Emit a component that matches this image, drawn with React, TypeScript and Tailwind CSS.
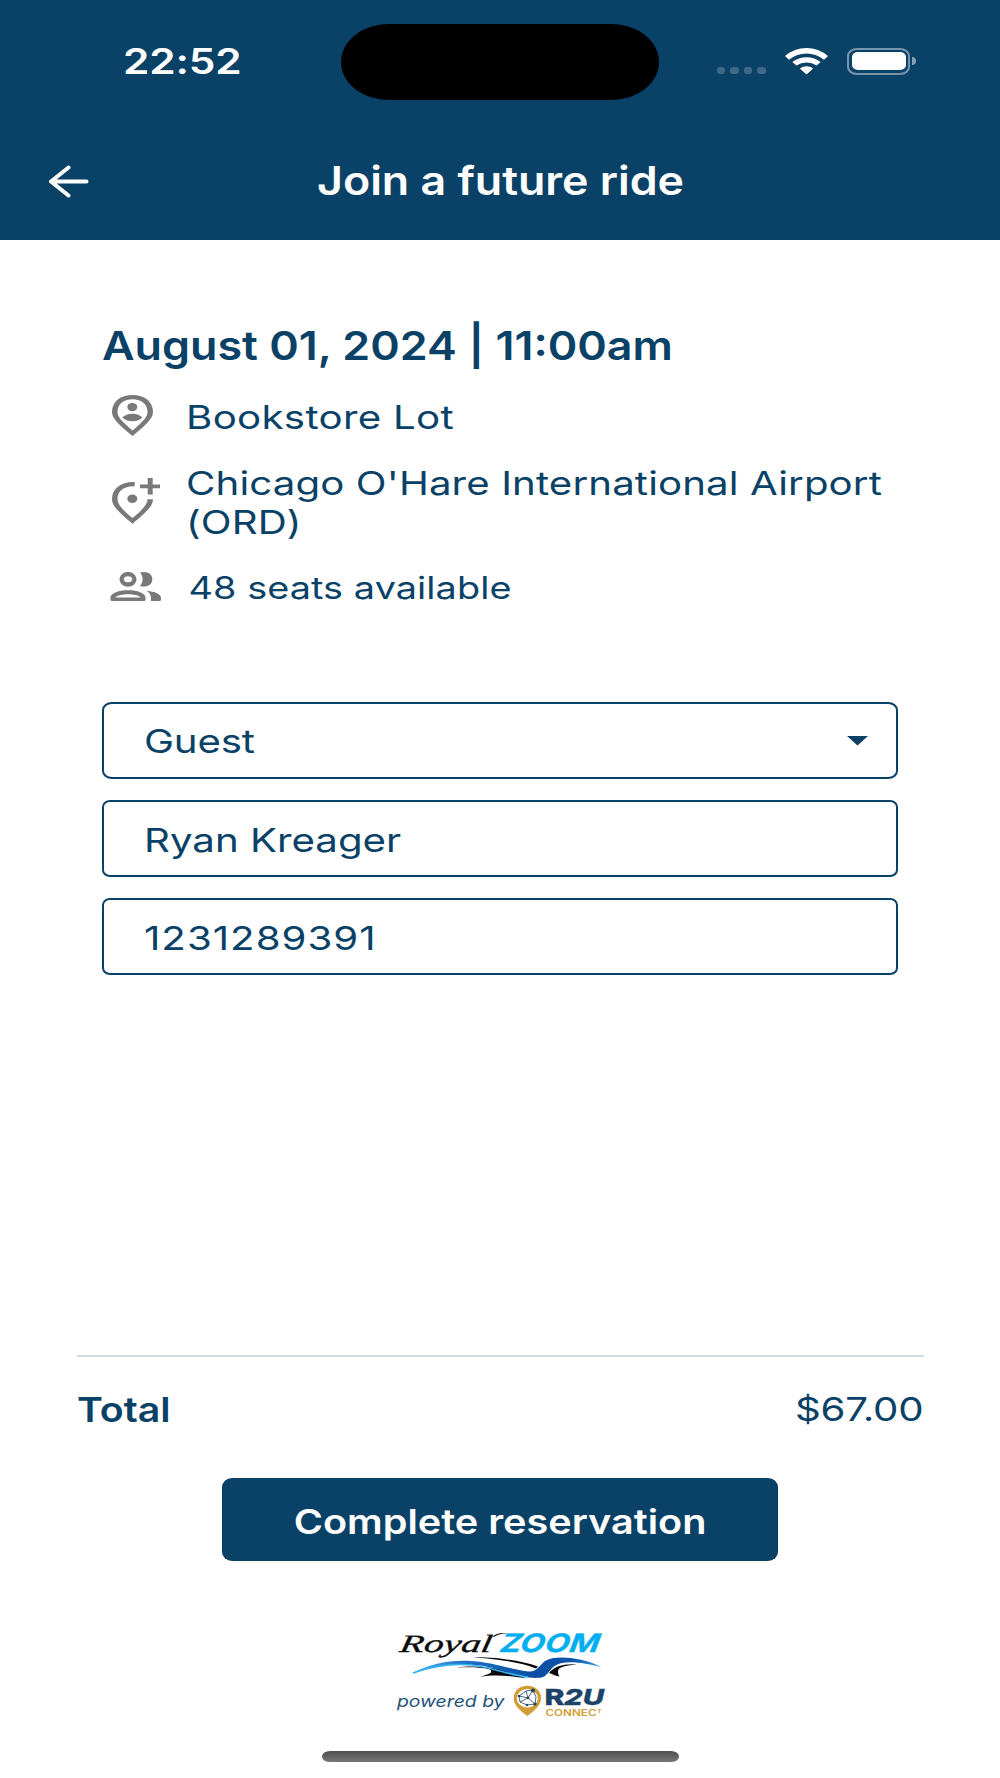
import React from 'react';

const WifiIcon = () => (
  <svg width="43" height="27" viewBox="0 0 43 27" fill="white">
    <path d="M0 8Q9.5 0 21.5 0Q33.5 0 43 8L39 11.7Q31 5.4 21.5 5.4Q12 5.4 4 11.7Z" />
    <path d="M7.3 14Q13.5 9.2 21.5 9.2Q29.5 9.2 35.7 14L31.5 17.6Q27 14.5 21.5 14.5Q16 14.5 11.5 17.6Z" />
    <path d="M21.5 26.5L14.8 20.5Q18 18.2 21.5 18.2Q25 18.2 28.2 20.5Z" />
  </svg>
);

const BackIcon = () => (
  <svg width="41" height="34" viewBox="0 0 41 34" fill="none" stroke="white" strokeWidth="4" strokeLinecap="round" strokeLinejoin="round">
    <path d="M38.5 16.5H3M20.5 2.5L3 16.5L20.5 30.5" />
  </svg>
);

const PersonPinIcon = () => (
  <svg width="41" height="41" viewBox="0 0 41 41" fill="#797979">
    <path
      fillRule="evenodd"
      d="M20.5 41C7 30 0 23.5 0 17C0 6.5 8.5 0 20.5 0C32.5 0 41 6.5 41 17C41 23.5 34 30 20.5 41ZM20.5 35.4C30.5 27.3 35.5 22 35.5 17C35.5 9 29.5 4.2 20.5 4.2C11.5 4.2 5.5 9 5.5 17C5.5 22 10.5 27.3 20.5 35.4Z"
    />
    <ellipse cx="20.3" cy="12" rx="5" ry="4.1" />
    <path d="M10.3 22.6C12.5 20 16 18.7 20.3 18.7C24.6 18.7 28.1 20 30.3 22.6C28.1 25 24.6 26.3 20.3 26.3C16 26.3 12.5 25 10.3 22.6Z" />
  </svg>
);

const AddPinIcon = () => (
  <svg width="48" height="46" viewBox="0 0 48 46" fill="#797979">
    <path d="M22.7 4.1C9 3.6 0 10.5 0 21.2C0 27.8 7 34.5 20.5 45.7C34 34.5 41 27.8 41 21.2H35.5C35.5 26.4 30.5 31.8 20.5 40C10.5 31.8 5.5 26.4 5.5 21.2C5.5 12.8 12.5 7.8 22.7 8.4Z" />
    <ellipse cx="20.3" cy="20.8" rx="5" ry="4.2" />
    <path d="M35.7 0H40.7V6.5H48V10.3H40.7V16.6H35.7V10.3H28V6.5H35.7Z" />
  </svg>
);

const PeopleIcon = () => (
  <svg width="51" height="29" viewBox="0 0 51 29" fill="#797979">
    <ellipse cx="18" cy="7.3" rx="6.4" ry="5.2" fill="none" stroke="#797979" strokeWidth="4.3" />
    <path d="M30 .5C31.2 .2 32.5 0 34 0C39 0 42.3 3 42.3 7.2C42.3 11.5 39 14.5 34 14.5C32.5 14.5 31.2 14.3 30 13.9C33.5 9.8 33.5 4.7 30 .5Z" />
    <path
      fillRule="evenodd"
      d="M.5 27.5V25.5C.5 20.8 9 18.2 18 18.2C27 18.2 35.5 20.8 35.5 25.5V27.5Q35.5 29 34 29H2Q.5 29 .5 27.5ZM5.2 25.5H30.8C28.5 23.3 23.5 22.2 18 22.2C12.5 22.2 7.5 23.3 5.2 25.5Z"
    />
    <path d="M36.5 18.7C45 19.5 51 22 51 26V27.5Q51 29 49.5 29H41V26C41 23 39.5 20.5 36.5 18.7Z" />
  </svg>
);

const BrandLogo = () => (
  <svg width="225" height="95" viewBox="0 0 225 95">
    <defs>
      <linearGradient id="wave" x1="21" y1="0" x2="212" y2="0" gradientUnits="userSpaceOnUse">
        <stop offset="0" stopColor="#4bb8f0" />
        <stop offset="0.3" stopColor="#1c6fc4" />
        <stop offset="0.65" stopColor="#0b4ea2" />
        <stop offset="0.85" stopColor="#0d56ad" />
        <stop offset="1" stopColor="#3aa5e6" />
      </linearGradient>
    </defs>

    <text x="9" y="27" transform="translate(4.6 0) skewX(-10)" fontFamily="'Liberation Serif', serif" fontStyle="italic" fontSize="25" textLength="92" lengthAdjust="spacingAndGlyphs" fill="#0a0a0a" stroke="#0a0a0a" strokeWidth="0.3">
      Royal
    </text>
    <path d="M102 12C106 8.3 111 7.3 117.5 8.3C112 8.6 108 9.3 105 11.5Z" fill="#0a0a0a" />
    <text x="109" y="27.3" transform="translate(5 0) skewX(-10)" fontFamily="Inter, sans-serif" fontStyle="italic" fontWeight="700" fontSize="25.5" textLength="99" lengthAdjust="spacingAndGlyphs" fill="#00aeef" stroke="#00aeef" strokeWidth="0.3">
      ZOOM
    </text>

    <path d="M83 32C102 32 130 35 148 41.5L146 43.5C130 37 105 34 83 32Z" fill="#0a0a0a" />
    <path d="M66.7 42.5C80 40.5 98 41.5 112 44.5C122 47 130 51 137 53.5C124 51.5 106 48.5 90 52C98 49 105 47.5 99 44C90 42 78 42 66.7 42.5Z" fill="#0a0a0a" />
    <path d="M159 48C165 41 174 38.5 187 39.5C177 40 170 42 168.5 44.5C167.5 46.5 168 49 169.5 51.5C166 51 163 49.5 159 48Z" fill="#0a0a0a" />
    <path d="M21.7 48.3C38 39.5 58 35 78 35.8C103 37 120 44.5 138 46.5C147 47.5 149 40.5 155 36C162 31.5 176 31.5 190 34.5C198 36.3 206 39 211.7 42.3C198 38.5 182 36 172 38C160 40.5 160 49 153 52C145 54.5 130 51.5 120 48C105 43 92 39.5 73 39.5C53 39.5 36 43.5 21.7 48.3Z" fill="url(#wave)" />
    <path d="M23 48C44 40.5 66 38.5 82 40C105 43 120 50.5 138 52" fill="none" stroke="#35b4f2" strokeWidth="1.6" />

    <text x="7" y="81.5" fontFamily="Inter, sans-serif" fontStyle="italic" fontSize="16.5" textLength="107.5" lengthAdjust="spacingAndGlyphs" fill="#245379">
      powered by
    </text>

    <path d="M137.3 91C130 85.5 123.7 80.5 123.7 73C123.7 66 129.5 60.7 137.3 60.7C145 60.7 151 66 151 73C151 80.5 144.5 85.5 137.3 91Z" fill="#d19c35" />
    <ellipse cx="137.3" cy="73.2" rx="10.5" ry="9.2" fill="white" />
    <g fill="none" stroke="#1c4468" strokeWidth="0.8">
      <path d="M129 71L136 66L143 65L146 72L145 79L137 80L130 77Z" />
      <path d="M129 71L138 73L143 65M138 73L145 79M138 73L130 77M136 66L138 73" />
    </g>
    <g fill="#1c4468">
      <circle cx="143" cy="65.5" r="2" />
      <circle cx="129" cy="71" r="1.3" />
      <circle cx="138" cy="73" r="1.3" />
      <circle cx="145" cy="79" r="1.6" />
      <circle cx="137" cy="80" r="1.2" />
    </g>

    <g fontFamily="Inter, sans-serif" fontWeight="800" fontSize="22" fill="#1c4468" stroke="#1c4468" strokeWidth="0.3">
      <text x="154.5" y="79.8" textLength="20" lengthAdjust="spacingAndGlyphs">R</text>
      <text x="174" y="79.8" fontStyle="italic" textLength="40" lengthAdjust="spacingAndGlyphs">2U</text>
    </g>
    <g fontFamily="Inter, sans-serif" fontWeight="600" fill="#d19c35">
      <text x="155.5" y="91" fontSize="9.2" textLength="51" lengthAdjust="spacingAndGlyphs">CONNEC</text>
      <text x="207" y="87.5" fontSize="5" textLength="5" lengthAdjust="spacingAndGlyphs">T</text>
    </g>
  </svg>
);

const Header = () => (
  <header className="h-[240px] bg-[#0a4166] text-white">
    <div className="flex h-[122px] items-center">
      <div className="w-[341px] pt-px pl-[122.5px]">
        <div className="origin-left scale-x-[1.21] text-[35px] leading-none font-semibold tracking-[-0.15px]">22:52</div>
      </div>
      <div className="mt-[2px] h-[76px] w-[318px] rounded-[47px/38px] bg-black" />
      <div className="flex flex-1 items-center justify-end pr-[84px]">
        <div className="mt-[19px] mr-[19px] flex gap-[5px]">
          {[0, 1, 2, 3].map((dot) => (
            <div key={dot} className="h-[7px] w-[8.6px] rounded-[3px] bg-white/22" />
          ))}
        </div>
        <WifiIcon />
        <div className="ml-[19px] h-[27px] w-[63px] rounded-[10px/8px] border-2 border-white/45 p-[2.5px]">
          <div className="h-full w-full rounded-[6px/5px] bg-white" />
        </div>
        <div className="ml-[2px] h-[8px] w-[4px] rounded-r-full bg-white/50" />
      </div>
    </div>
    <div className="flex h-[118px] items-center">
      <div className="mt-[2px] ml-[48px]">
        <BackIcon />
      </div>
      <h1 className="ml-[227.5px] origin-left scale-x-[1.132] pt-[2px] text-[39.5px] leading-none font-semibold whitespace-nowrap">
        Join a future ride
      </h1>
    </div>
  </header>
);

interface InfoRowProps {
  icon: React.ReactNode;
  className: string;
  children: React.ReactNode;
}

const InfoRow: React.FC<InfoRowProps> = ({ icon, className, children }) => (
  <div className={`flex items-start ${className}`}>
    <div className="w-[84px] shrink-0 pl-[10px]">{icon}</div>
    <div className="origin-left scale-x-[1.219] whitespace-nowrap">{children}</div>
  </div>
);

const Field: React.FC<{ className?: string; children: React.ReactNode }> = ({ className = '', children }) => (
  <div className={`flex h-[77.5px] items-center justify-between border-2 border-[#0a4166] pr-[28px] pl-[39.5px] text-[33px] ${className}`}>
    {children}
  </div>
);

export default function App() {
  return (
    <div className="h-[1778px] w-[1000px] overflow-hidden bg-white font-['Inter',sans-serif] text-[#0a4166]">
      <Header />

      <main>
        <section className="pt-[80px] pl-[102px]">
          <h2 className="origin-left scale-x-[1.12] text-[40px] leading-[51px] font-semibold whitespace-nowrap">
            August 01, 2024 | 11:00am
          </h2>
          <InfoRow icon={<PersonPinIcon />} className="mt-[24px] text-[33px] leading-[45px] tracking-[0.25px]">
            Bookstore Lot
          </InfoRow>
          <InfoRow
            icon={<div className="pt-[14px]"><AddPinIcon /></div>}
            className="mt-[24px] text-[33px] leading-[39.3px] tracking-[0.09px]"
          >
            Chicago O'Hare International Airport
            <br />
            (ORD)
          </InfoRow>
          <InfoRow
            icon={<div className="-ml-[2px] pt-[7.5px]"><PeopleIcon /></div>}
            className="mt-[22px] text-[31px] leading-[45px] tracking-[0.08px]"
          >
            <span className="pl-[2px]">48 seats available</span>
          </InfoRow>
        </section>

        <section className="mt-[92px] flex flex-col gap-[20.5px] px-[102px]">
          <Field className="rounded-[10px/8px]">
            <span className="origin-left scale-x-[1.219] pt-[3px] tracking-[-0.15px]">Guest</span>
            <svg className="mt-[2px]" width="21" height="10" viewBox="0 0 21 10">
              <path d="M0 0H21L10.5 9.5Z" fill="#0a4166" />
            </svg>
          </Field>
          <Field className="rounded-[8px/7px]">
            <span className="origin-left scale-x-[1.219] pt-[4px]">Ryan Kreager</span>
          </Field>
          <Field className="rounded-[8px/7px]">
            <span className="origin-left scale-x-[1.219] pt-[4px] tracking-[0.82px]">1231289391</span>
          </Field>
        </section>

        <section className="mx-[76.5px] mt-[380px] border-t-2 border-[#d0dfe4]">
          <div className="flex h-[105px] items-center justify-between">
            <span className="origin-left scale-x-[1.155] text-[34px] font-semibold">Total</span>
            <span className="origin-right scale-x-[1.219] pt-px text-[33px] tracking-[-0.2px]">$67.00</span>
          </div>
        </section>

        <button className="mx-auto mt-[16px] flex h-[83px] w-[556px] items-center justify-center rounded-[10px/9px] bg-[#0a4166] pt-[5px] text-white">
          <span className="scale-x-[1.165] text-[34px] leading-none font-semibold whitespace-nowrap">Complete reservation</span>
        </button>
      </main>

      <footer className="mt-[64px] flex flex-col pl-[390px]">
        <BrandLogo />
      </footer>
      <div className="mx-auto mt-[31px] h-[11px] w-[357px] rounded-[8px/5.5px] bg-linear-to-b from-[#505050] to-[#777777]" />
    </div>
  );
}
